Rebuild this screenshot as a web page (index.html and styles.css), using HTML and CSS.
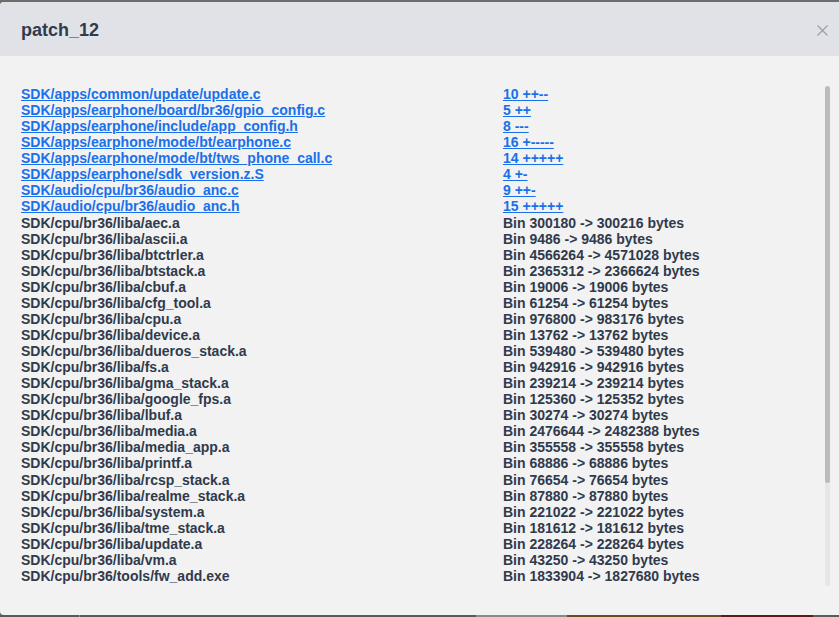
FILE: index.html
```html
<!DOCTYPE html>
<html lang="en">
<head>
<meta charset="utf-8">
<title>patch_12</title>
<link rel="stylesheet" href="styles.css">
</head>
<body>
<div class="page">
  <div class="dialog">
    <div class="dialog-header">
      <span class="dialog-title">patch_12</span>
      <button class="dialog-close" aria-label="Close">
        <svg width="11" height="11" viewBox="0 0 11 11"><path d="M0.5 0.5 L10.5 10.5 M10.5 0.5 L0.5 10.5" stroke="#9a9ca3" stroke-width="1.1" fill="none"/></svg>
      </button>
    </div>
    <div class="dialog-body">
      <div class="scroller">
        <div class="viewport">
          <div class="files">
            <div class="cell"><a href="#">SDK/apps/common/update/update.c</a></div><div class="cell"><a href="#">10 ++--</a></div>
            <div class="cell"><a href="#">SDK/apps/earphone/board/br36/gpio_config.c</a></div><div class="cell"><a href="#">5 ++</a></div>
            <div class="cell"><a href="#">SDK/apps/earphone/include/app_config.h</a></div><div class="cell"><a href="#">8 ---</a></div>
            <div class="cell"><a href="#">SDK/apps/earphone/mode/bt/earphone.c</a></div><div class="cell"><a href="#">16 +-----</a></div>
            <div class="cell"><a href="#">SDK/apps/earphone/mode/bt/tws_phone_call.c</a></div><div class="cell"><a href="#">14 +++++</a></div>
            <div class="cell"><a href="#">SDK/apps/earphone/sdk_version.z.S</a></div><div class="cell"><a href="#">4 +-</a></div>
            <div class="cell"><a href="#">SDK/audio/cpu/br36/audio_anc.c</a></div><div class="cell"><a href="#">9 ++-</a></div>
            <div class="cell"><a href="#">SDK/audio/cpu/br36/audio_anc.h</a></div><div class="cell"><a href="#">15 +++++</a></div>
            <div class="cell">SDK/cpu/br36/liba/aec.a</div><div class="cell">Bin 300180 -&gt; 300216 bytes</div>
            <div class="cell">SDK/cpu/br36/liba/ascii.a</div><div class="cell">Bin 9486 -&gt; 9486 bytes</div>
            <div class="cell">SDK/cpu/br36/liba/btctrler.a</div><div class="cell">Bin 4566264 -&gt; 4571028 bytes</div>
            <div class="cell">SDK/cpu/br36/liba/btstack.a</div><div class="cell">Bin 2365312 -&gt; 2366624 bytes</div>
            <div class="cell">SDK/cpu/br36/liba/cbuf.a</div><div class="cell">Bin 19006 -&gt; 19006 bytes</div>
            <div class="cell">SDK/cpu/br36/liba/cfg_tool.a</div><div class="cell">Bin 61254 -&gt; 61254 bytes</div>
            <div class="cell">SDK/cpu/br36/liba/cpu.a</div><div class="cell">Bin 976800 -&gt; 983176 bytes</div>
            <div class="cell">SDK/cpu/br36/liba/device.a</div><div class="cell">Bin 13762 -&gt; 13762 bytes</div>
            <div class="cell">SDK/cpu/br36/liba/dueros_stack.a</div><div class="cell">Bin 539480 -&gt; 539480 bytes</div>
            <div class="cell">SDK/cpu/br36/liba/fs.a</div><div class="cell">Bin 942916 -&gt; 942916 bytes</div>
            <div class="cell">SDK/cpu/br36/liba/gma_stack.a</div><div class="cell">Bin 239214 -&gt; 239214 bytes</div>
            <div class="cell">SDK/cpu/br36/liba/google_fps.a</div><div class="cell">Bin 125360 -&gt; 125352 bytes</div>
            <div class="cell">SDK/cpu/br36/liba/lbuf.a</div><div class="cell">Bin 30274 -&gt; 30274 bytes</div>
            <div class="cell">SDK/cpu/br36/liba/media.a</div><div class="cell">Bin 2476644 -&gt; 2482388 bytes</div>
            <div class="cell">SDK/cpu/br36/liba/media_app.a</div><div class="cell">Bin 355558 -&gt; 355558 bytes</div>
            <div class="cell">SDK/cpu/br36/liba/printf.a</div><div class="cell">Bin 68886 -&gt; 68886 bytes</div>
            <div class="cell">SDK/cpu/br36/liba/rcsp_stack.a</div><div class="cell">Bin 76654 -&gt; 76654 bytes</div>
            <div class="cell">SDK/cpu/br36/liba/realme_stack.a</div><div class="cell">Bin 87880 -&gt; 87880 bytes</div>
            <div class="cell">SDK/cpu/br36/liba/system.a</div><div class="cell">Bin 221022 -&gt; 221022 bytes</div>
            <div class="cell">SDK/cpu/br36/liba/tme_stack.a</div><div class="cell">Bin 181612 -&gt; 181612 bytes</div>
            <div class="cell">SDK/cpu/br36/liba/update.a</div><div class="cell">Bin 228264 -&gt; 228264 bytes</div>
            <div class="cell">SDK/cpu/br36/liba/vm.a</div><div class="cell">Bin 43250 -&gt; 43250 bytes</div>
            <div class="cell">SDK/cpu/br36/tools/fw_add.exe</div><div class="cell">Bin 1833904 -&gt; 1827680 bytes</div>
          </div>
        </div>
        <div class="scrollbar"><div class="scrollbar-thumb"></div></div>
      </div>
    </div>
  </div>
  <div class="backdrop-strip">
    <span class="seg seg-a"></span>
    <span class="seg seg-b"></span>
    <span class="seg seg-c"></span>
    <span class="seg seg-d"></span>
    <span class="seg seg-e"></span>
    <span class="seg seg-f"></span>
  </div>
</div>
</body>
</html>
```

FILE: styles.css
```css
html, body {
  margin: 0;
  padding: 0;
  height: 100%;
  overflow: hidden;
  background: #6d6d6d;
  font-family: "Liberation Sans", Arial, sans-serif;
}

.page {
  display: flex;
  flex-direction: column;
  height: 617px;
  padding-top: 2px;
  box-sizing: border-box;
}

.dialog {
  height: 613px;
  width: 845px;
  background: #f2f2f2;
  border-radius: 4px;
  overflow: hidden;
  display: flex;
  flex-direction: column;
}

.dialog-header {
  height: 54px;
  flex: none;
  background: #e1e2e7;
  display: flex;
  align-items: center;
  padding: 0 21px;
  box-sizing: border-box;
  position: relative;
}

.dialog-title {
  font-size: 18px;
  font-weight: bold;
  color: #2f3b50;
  line-height: 20px;
  margin-top: 1px;
}

.dialog-close {
  position: absolute;
  left: 817px;
  top: 23px;
  width: 11px;
  height: 11px;
  padding: 0;
  border: 0;
  background: transparent;
  display: block;
}

.dialog-close svg {
  display: block;
}

.dialog-body {
  padding: 30px 0 0 21px;
}

.scroller {
  width: 809px;
  height: 500px;
  display: flex;
}

.viewport {
  flex: 1;
  overflow: hidden;
}

.scrollbar {
  flex: none;
  width: 5px;
  height: 500px;
  background: #e6e6e6;
  border-radius: 3px;
}

.scrollbar-thumb {
  height: 397px;
  background: #bcbcbc;
  border-radius: 3px;
}

.files {
  display: grid;
  grid-template-columns: 482px 1fr;
  font-size: 14px;
  font-weight: bold;
  line-height: 16.07px;
  color: #303a4c;
}

.cell {
  white-space: nowrap;
}

.cell a {
  color: #1a70ea;
  text-decoration: underline;
}

.backdrop-strip {
  height: 2px;
  display: flex;
  background: #5c5c5c;
}

.seg { display: block; height: 2px; }
.seg-a { width: 79px; background: #5a5a5a; }
.seg-b { width: 1px; background: #8a8a8a; }
.seg-c { width: 396px; background: #5a5a5a; }
.seg-d { width: 91px; background: #8a8a8a; }
.seg-e { width: 154px; background: #6a4a22; }
.seg-f { width: 92px; background: #5e1a1a; }
```
